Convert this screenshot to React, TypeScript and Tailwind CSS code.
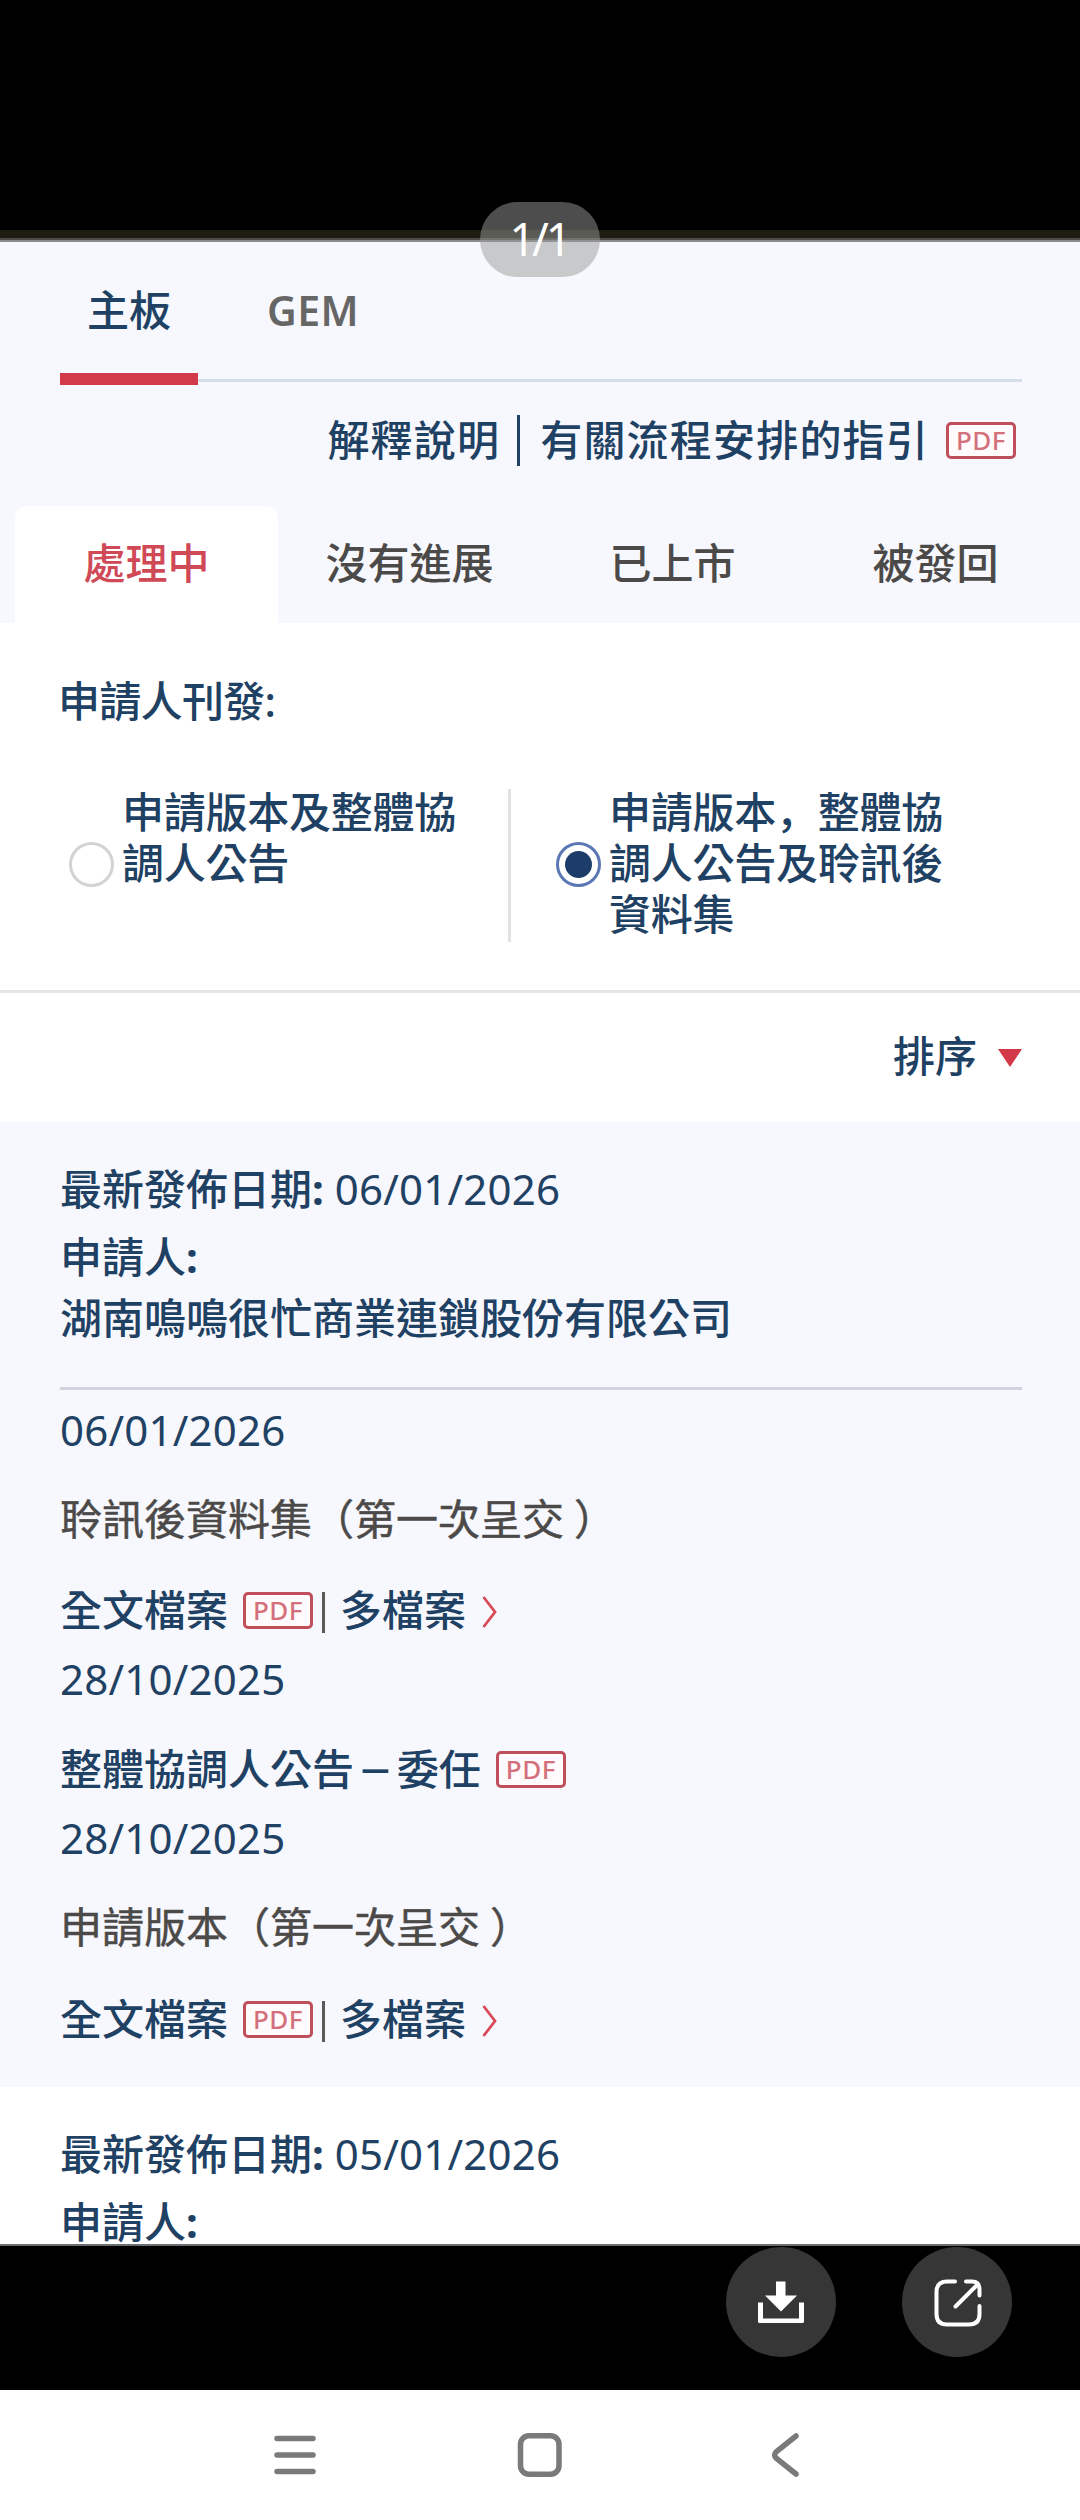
import type { ReactNode } from 'react';

const filterTabs = ['處理中', '沒有進展', '已上市', '被發回'];

function PdfBadge({ className = '' }: { className?: string }) {
  return (
    <span
      className={`flex h-[37px] w-[70px] shrink-0 items-center justify-center rounded-[5px] border-3 border-[#c04f5c] bg-[#fffafb] text-[26px] leading-none tracking-[0.5px] text-[#d4707c] ${className}`}>
      PDF
    </span>
  );
}

function Line({ className = '', children }: { className?: string; children: ReactNode }) {
  return <div className={`flex h-[50px] items-center whitespace-nowrap ${className}`}>{children}</div>;
}

function Radio({ checked = false }: { checked?: boolean }) {
  return (
    <span
      className={`mb-[2px] flex size-[45px] shrink-0 items-center justify-center rounded-full bg-white ${
        checked ? 'border-3 border-[#5b78b4]' : 'border-3 border-[#d3d3d3]'
      }`}>
      {checked && <span className="size-[27px] rounded-full bg-[#1c3d6a]" />}
    </span>
  );
}

function DocTitle({ name }: { name: string }) {
  return (
    <Line className="mt-[39px] text-[#4c4a49] [-webkit-text-stroke:0.5px_#4c4a49]">
      {name}（第一次呈交
      <span className="ml-[10px]">）</span>
    </Line>
  );
}

function FileLinks({ className = '' }: { className?: string }) {
  return (
    <Line className={`font-medium ${className}`}>
      <span>全文檔案</span>
      <PdfBadge className="ml-[15px]" />
      <span className="mt-1 ml-[9px] h-[41px] w-[3px] bg-[#5a5a5a]" />
      <span className="ml-[15px]">多檔案</span>
      <svg className="mt-1 ml-[15px]" width="18" height="32" viewBox="0 0 18 32" fill="none">
        <path d="M2.500 1L14 16L2.500 31" stroke="#d84a58" strokeWidth="2.8" />
      </svg>
    </Line>
  );
}

function CardHead({ date }: { date: string }) {
  return (
    <>
      <Line>
        <span className="font-medium">
          最新發佈日期<b className="font-bold">:</b>
        </span>
        <span className="ml-[11px] tracking-[0.2px]">{date}</span>
      </Line>
      <Line className="mt-[18px] font-medium">
        申請人<b className="font-bold">:</b>
      </Line>
    </>
  );
}

export default function App() {
  return (
    <main className="relative flex h-[2520px] w-[1080px] flex-col overflow-hidden bg-black font-['Noto_Sans','Noto_Sans_CJK_TC',sans-serif] text-[42px] leading-[50px] text-[#1f4163]">
      <div className="h-[230px] shrink-0" />
      <div className="h-2 shrink-0 bg-[#1c1c13]" />
      <div className="h-[2px] shrink-0 bg-[#4a4a46]" />
      <div className="h-[2px] shrink-0 bg-[#8b8b8c]" />

      <div className="h-[2002px] shrink-0 overflow-hidden bg-white">
        <header className="h-[381px] bg-[#f7f8fd]">
          <nav className="mx-[60px] flex h-[143px] w-[962px]">
            <div className="flex h-full w-[138px] flex-col justify-between">
              <Line className="mt-[43px] justify-center font-medium">主板</Line>
              <div className="h-3 bg-[#d33a49]" />
            </div>
            <div className="flex h-full flex-1 flex-col justify-between">
              <Line className="mt-[43px] ml-[69px] text-[41px] font-semibold tracking-[0.4px] text-[#666]">GEM</Line>
              <div className="mb-[3px] h-[3px] bg-[#d6dee8]" />
            </div>
          </nav>

          <div className="mt-[27px] mr-[64px] flex h-[56px] items-center justify-end font-medium tracking-[1.2px]">
            <span>解釋說明</span>
            <span className="mr-[20px] ml-[17px] h-[51px] w-[3px] bg-[#1f4163]" />
            <span>有關流程安排的指引</span>
            <PdfBadge className="ml-[17px]" />
          </div>

          <div className="mt-[38px] ml-[15px] flex h-[117px] font-medium text-[#4c4a49]">
            {filterTabs.map((tab, i) => (
              <div
                key={tab}
                className={`flex w-[263px] items-center justify-center pb-1 ${
                  i === 0 ? 'rounded-t-xl bg-white text-[#cf4956]' : ''
                }`}>
                {tab}
              </div>
            ))}
          </div>
        </header>

        <section className="h-[367px] pt-[53px]">
          <Line className="ml-[58px] font-medium tracking-[-0.7px]">申請人刊發:</Line>
          <div className="mt-[63px] flex h-[153px] font-medium leading-[51px] tracking-[-0.25px]">
            <div className="flex w-[508px] items-center pl-[69px]">
              <Radio />
              <p className="mb-[6px] ml-[8px] h-[153px]">
                申請版本及整體協
                <br />
                調人公告
              </p>
            </div>
            <div className="w-[3px] bg-[#e2e2e2]" />
            <div className="flex items-center pl-[45px]">
              <Radio checked />
              <p className="mb-[6px] ml-[8px] h-[153px]">
                申請版本<span className="font-['Noto_Sans_CJK_SC'] leading-none">，</span>整體協
                <br />
                調人公告及聆訊後
                <br />
                資料集
              </p>
            </div>
          </div>
        </section>

        <div className="flex h-[132px] items-center justify-end border-t-3 border-[#e6e6e6] pr-[57px] font-medium">
          <span className="mb-[4px]">排序</span>
          <svg className="ml-[20px]" width="26" height="20" viewBox="0 0 26 20">
            <path d="M1 1H25L13 19Z" fill="#d33a49" />
          </svg>
        </div>

        <article className="h-[965px] bg-[#f7f8fd] px-[60px] pt-[42px]">
          <CardHead date="06/01/2026" />
          <Line className="mt-[11px] font-medium">湖南鳴鳴很忙商業連鎖股份有限公司</Line>
          <div className="mt-[44px] h-[3px] w-[962px] bg-[#d0d4df]" />
          <Line className="mt-[15px] tracking-[0.2px]">06/01/2026</Line>
          <DocTitle name="聆訊後資料集" />
          <FileLinks className="mt-[41px]" />
          <Line className="mt-[19px] tracking-[0.2px]">28/10/2025</Line>
          <Line className="mt-[40px] font-medium">
            <span className="whitespace-pre">
              整體協調人公告 <span className="inline-block -translate-y-[3px] scale-x-145">–</span> 委任
            </span>
            <PdfBadge className="ml-[15px]" />
          </Line>
          <Line className="mt-[19px] tracking-[0.2px]">28/10/2025</Line>
          <DocTitle name="申請版本" />
          <FileLinks className="mt-[42px]" />
        </article>

        <article className="px-[60px] pt-[42px]">
          <CardHead date="05/01/2026" />
        </article>
      </div>
      <div className="h-[2px] shrink-0 bg-[#6b6e70]" />

      <div className="flex h-[144px] shrink-0 justify-end gap-[66px] pt-[1px] pr-[68px]">
        <button className="flex size-[110px] items-center justify-center rounded-full bg-[#363636]">
          <svg width="48" height="48" viewBox="0 0 48 48" fill="#fff">
            <path d="M19 3.5H28.5V17.5H40L24 33.5L8 17.5H19Z" />
            <path d="M1 24.500H6V40.500H42V24.500H47V43.500Q47 45 45.500 45H2.500Q1 45 1 43.500Z" />
          </svg>
        </button>
        <button className="flex size-[110px] items-center justify-center rounded-full bg-[#363636] pl-[2px]">
          <svg
            width="50"
            height="50"
            viewBox="0 0 50 50"
            fill="none"
            stroke="#fff"
            strokeWidth="4"
            strokeLinecap="round"
            strokeLinejoin="round">
            <path d="M22 4.500H14Q3.500 4.500 3.500 15V37Q3.500 47.500 14 47.500H36Q46.500 47.500 46.500 37V29" />
            <path d="M33 4.500H39Q46.500 4.500 46.500 12V18.500" />
            <path d="M22.500 29.500L44 8" />
          </svg>
        </button>
      </div>

      <nav className="h-[130px] shrink-0 bg-white pt-[43px]">
        <svg
          className="block"
          width="1080"
          height="44"
          fill="none"
          stroke="#7a7a7a"
          strokeWidth="5.500"
          strokeLinecap="round">
          <path d="M277 5.500H313M277 22H313M277 38.500H313" />
          <rect x="520.500" y="2.750" width="38.500" height="38.500" rx="8.500" />
          <path d="M796 3L776.500 18.500Q773 22 776.500 25.500L796 41" />
        </svg>
      </nav>

      {/* page counter floats over the top edge of the image */}
      <div className="absolute top-[202px] left-[480px] flex h-[75px] w-[120px] items-center justify-center rounded-full bg-[#9a9a9a]/50 pr-[2px] pb-[1px] text-[45px] tracking-[-3px] text-white">
        1/1
      </div>
    </main>
  );
}
